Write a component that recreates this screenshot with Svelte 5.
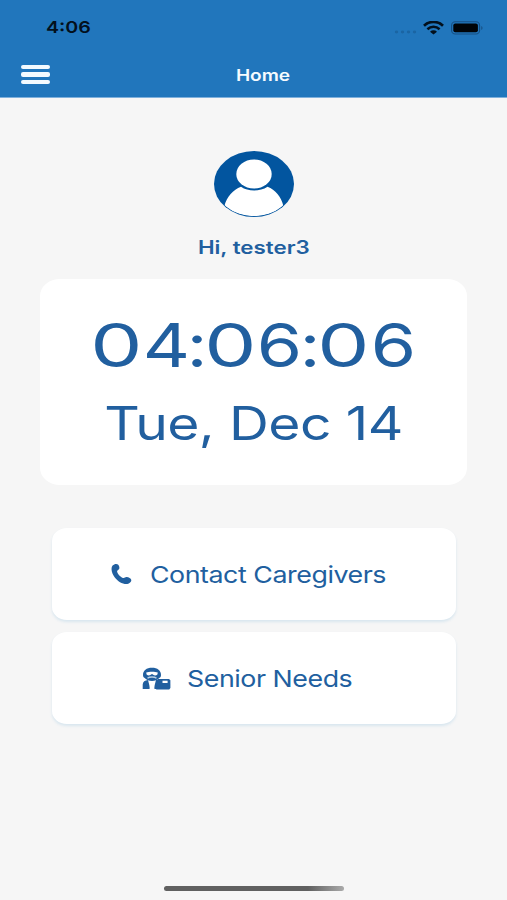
<script lang="ts">
	const user = 'tester3';
	const clock = '04:06:06';
	const date = 'Tue, Dec 14';
</script>

<div class="screen">
	<header>
		<div class="status">
			<span class="status-time">4:06</span>
			<div class="status-icons">
				<svg class="dots" width="24" height="4" viewBox="0 0 24 4">
					{#each [2.5, 8.5, 14.5, 20.5] as cx}
						<ellipse {cx} cy="2" rx="1.7" ry="1.4" />
					{/each}
				</svg>
				<svg class="wifi" width="21" height="14" viewBox="0 0 21 14">
					<g fill="none" stroke="#03101c">
						<path d="M1 4.7C6.3-.3 14.7-.3 20 4.7" stroke-width="2.7" />
						<path d="M4.4 8.2C8 5 13 5 16.6 8.2" stroke-width="2.5" />
					</g>
					<path d="M7 10.7C9 8.9 12 8.9 14 10.7L10.5 13.6Z" fill="#03101c" />
				</svg>
				<svg class="battery" width="33" height="14" viewBox="0 0 33 14">
					<rect x=".6" y=".8" width="28" height="12.2" rx="3.6" fill="none" stroke="#174f82" stroke-width="1.1" />
					<rect x="2.3" y="2.5" width="24.6" height="8.8" rx="2" fill="#000408" />
					<path d="M30.3 5v4c1.6-.5 1.6-3.5 0-4Z" fill="#174f82" />
				</svg>
			</div>
		</div>
		<nav>
			<button class="menu" aria-label="Menu">
				<i></i>
				<i></i>
				<i></i>
			</button>
			<h1>Home</h1>
		</nav>
	</header>

	<main>
		<svg class="avatar" width="80" height="66" viewBox="0 0 80 66">
			<defs>
				<clipPath id="face"><ellipse cx="40" cy="33" rx="39.2" ry="32.2" /></clipPath>
			</defs>
			<ellipse cx="40" cy="33" rx="40" ry="33" fill="#02559f" />
			<g clip-path="url(#face)">
				<path
					d="M10.5 54.5C13 45.5 19 39 27 35.8C34 40.8 46 40.8 53.5 35.8C61.5 39 67 45.5 69.3 54.5C63 61 52 65.2 40 65.2C28 65.2 17 61 10.5 54.5Z"
					fill="#fff"
				/>
			</g>
			<ellipse cx="40" cy="23" rx="17.7" ry="14.6" fill="#fff" />
		</svg>
		<p class="greeting">Hi, {user}</p>

		<section class="clock-card">
			<div class="clock">
				{#each clock as char}
					<span class:zero={char === '0'} class:colon={char === ':'}>{char}</span>
				{/each}
			</div>
			<div class="date">{date}</div>
		</section>

		<div class="actions">
			<button class="action contact">
				<svg width="21" height="22" viewBox="0 0 21 22">
					<path
						d="M1.6 2.6C3.1.9 5.8.5 7 1.6C8.4 2.8 8.8 5 7.9 6.3C7.3 7.2 6 7.4 6.1 8.4C6.5 10.9 9.7 14.2 12.2 15C13.5 15.4 14 14.2 15.4 14.1C17.3 13.9 20 15.4 20.3 17C20.6 18.7 18.6 20.7 16.3 21C11.6 21.4 6.8 18.3 3.8 14.4C1.2 11-.8 5.5 1.6 2.6Z"
					/>
				</svg>
				<span>Contact Caregivers</span>
			</button>
			<button class="action senior">
				<svg width="29" height="23" viewBox="0 0 29 23">
					<path d="M1 8C1 3.5 4.5.8 10 .8S19 3.5 19 8C19 9.5 18.4 10.5 17.3 11C15.5 13 12.8 14 10 14S4.5 13 2.7 11C1.6 10.5 1 9.5 1 8Z" />
					<path d="M4.2 5.6C7 4.6 13 4.6 15.8 5.6L15.4 7.4C14 9 11.5 8.6 10.8 7.3H9.2C8.5 8.6 6 9 4.6 7.4Z" fill="#fff" />
					<path d="M5.5 11.3C7.5 9.6 12.5 9.6 14.5 11.3" fill="none" stroke="#b6cee3" stroke-width="1.4" />
					<path d="M.7 22V17.5C.7 14.8 3 13.3 6 13L8.3 22ZM11.7 22L14 13H17V22Z" />
					<path d="M8.3 14.5H11.7L12.5 22H7.5Z" fill="#fff" />
					<path d="M15.7 12H27L28.4 13.2V21L27.2 22.5H14.2V17Z" />
					<path d="M20.5 13.7H25.6V16H20.5Z" fill="#fff" />
				</svg>
				<span>Senior Needs</span>
			</button>
		</div>
	</main>

	<div class="home-bar"></div>
</div>

<style>
	:global(body) {
		background: #f6f6f6;
	}
	.screen {
		box-sizing: border-box;
		height: 900px;
		padding-bottom: 9px;
		display: flex;
		flex-direction: column;
		background: #f6f6f6;
		color: #215f9f;
		font-family: Inter, 'Liberation Sans', sans-serif;
	}
	header {
		box-sizing: border-box;
		height: 98px;
		padding-top: 4px;
		background: #2176bc;
		border-bottom: 1px solid #7fb0dc;
	}
	.status {
		height: 47px;
		padding: 0 23px 0 46px;
		display: flex;
		align-items: center;
		justify-content: space-between;
	}
	.status-time {
		color: #03101c;
		font-size: 16.5px;
		font-weight: 600;
		line-height: 21px;
		transform: scaleX(1.19);
		transform-origin: left;
	}
	.status-icons {
		display: flex;
		align-items: center;
	}
	.dots {
		margin: 8px 5px 0 0;
		fill: #1b65a3;
	}
	.wifi {
		margin-right: 7px;
	}
	nav {
		height: 47px;
		padding: 0 21px;
		display: grid;
		grid-template-columns: 29px 1fr 10px;
		align-items: center;
	}
	button {
		padding: 0;
		border: 0;
		background: none;
		color: inherit;
		font: inherit;
	}
	.menu {
		display: grid;
		gap: 3.4px;
	}
	.menu i {
		height: 4.4px;
		border-radius: 2px;
		background: #f3faff;
	}
	h1 {
		margin: 0;
		color: #f6fbff;
		font-size: 16px;
		font-weight: 600;
		line-height: 20px;
		text-align: center;
		transform: scaleX(1.19);
	}
	main {
		padding-top: 52.6px;
		display: flex;
		flex-direction: column;
		align-items: center;
	}
	.greeting {
		margin: 19.4px 0 19px;
		font-size: 18px;
		font-weight: 600;
		line-height: 24px;
		transform: translateX(0.7px) scaleX(1.24);
	}
	.clock-card {
		box-sizing: border-box;
		width: 427px;
		height: 206px;
		padding-top: 30px;
		border-radius: 20px / 17px;
		background: #fff;
		text-align: center;
	}
	.clock {
		display: flex;
		justify-content: center;
		font-size: 60px;
		line-height: 72px;
		letter-spacing: -3px;
		font-feature-settings: 'calt' 0;
	}
	.clock span {
		width: 47px;
		display: flex;
		justify-content: center;
		transform: translateX(-2px) scaleX(1.22);
	}
	.clock .zero {
		width: 52.5px;
		transform: translateX(-2px) scaleX(1.38);
	}
	.clock .colon {
		width: 14px;
		letter-spacing: -5.5px;
		transform: translateX(-3.3px) scaleX(1.22);
	}
	.date {
		margin-top: 14.5px;
		font-size: 46px;
		line-height: 56px;
		letter-spacing: -0.5px;
		transform: scaleX(1.2);
	}
	.actions {
		margin-top: 43px;
		display: grid;
		gap: 12px;
	}
	.action {
		width: 404px;
		height: 92px;
		padding-top: 1px;
		display: flex;
		align-items: center;
		border-radius: 15px / 13px;
		background: #fff;
		box-shadow: 0 2px 3px #d8e6ef;
		font-size: 23.5px;
		line-height: 29px;
		letter-spacing: -0.4px;
	}
	.action svg {
		flex: none;
		fill: #215f9f;
	}
	.action span {
		white-space: nowrap;
		transform: scaleX(1.14);
		transform-origin: left;
	}
	.contact {
		padding-left: 59.5px;
		gap: 18px;
	}
	.senior {
		padding-left: 90px;
		gap: 16px;
	}
	.home-bar {
		width: 180px;
		height: 5px;
		margin: auto auto 0;
		border-radius: 3px;
		background: linear-gradient(90deg, #606060 80%, #aaa);
	}
</style>
